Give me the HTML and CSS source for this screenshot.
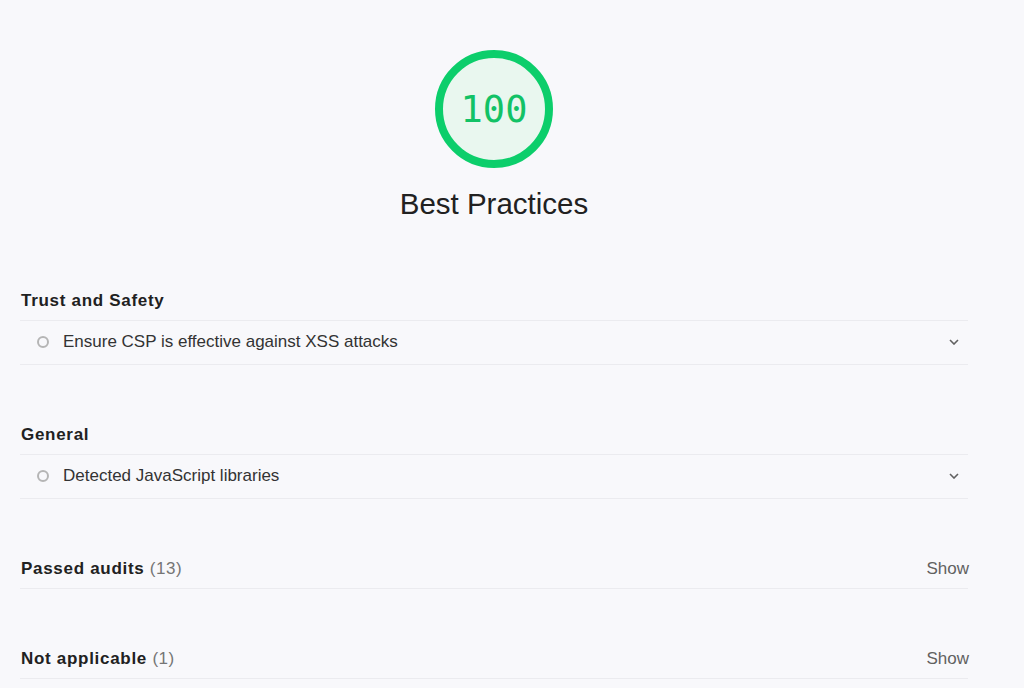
FILE: index.html
```html
<!DOCTYPE html>
<html lang="en">
<head>
  <meta charset="UTF-8">
  <meta name="viewport" content="width=device-width, initial-scale=1.0">
  <title>Best Practices</title>
  <link rel="stylesheet" href="styles.css">
</head>
<body>
<div class="report">
  <div class="score">
    <div class="gauge">
      <svg width="118" height="118" viewBox="0 0 118 118">
        <circle cx="59" cy="59" r="55" fill="#e9f7ef" stroke="#0cce6b" stroke-width="8"/>
      </svg>
      <span class="gauge-value">100</span>
    </div>
    <div class="score-title">Best Practices</div>
  </div>

  <div class="group">
    <div class="group-header">
      <span class="group-title">Trust and Safety</span>
    </div>
    <div class="audit">
      <span class="audit-icon"></span>
      <span class="audit-title">Ensure CSP is effective against XSS attacks</span>
      <svg class="chevron" width="10" height="6" viewBox="0 0 10 6"><polyline points="1,1 5,5 9,1" fill="none" stroke="#616161" stroke-width="1.6"/></svg>
    </div>
  </div>

  <div class="group">
    <div class="group-header">
      <span class="group-title">General</span>
    </div>
    <div class="audit">
      <span class="audit-icon"></span>
      <span class="audit-title">Detected JavaScript libraries</span>
      <svg class="chevron" width="10" height="6" viewBox="0 0 10 6"><polyline points="1,1 5,5 9,1" fill="none" stroke="#616161" stroke-width="1.6"/></svg>
    </div>
  </div>

  <div class="group">
    <div class="group-header">
      <span class="group-title">Passed audits <span class="count">(13)</span></span>
      <span class="show">Show</span>
    </div>
  </div>

  <div class="group">
    <div class="group-header">
      <span class="group-title">Not applicable <span class="count">(1)</span></span>
      <span class="show">Show</span>
    </div>
  </div>
</div>
</body>
</html>
```

FILE: styles.css
```css
body {
  margin: 0;
  background-color: #f8f8fb;
  font-family: "Liberation Sans", Arial, sans-serif;
  color: #212121;
}
.report {
  margin-left: 20px;
  width: 948px;
}
.score {
  display: flex;
  flex-direction: column;
  align-items: center;
  padding-top: 50px;
  padding-bottom: 9px;
}
.gauge {
  position: relative;
  width: 118px;
  height: 118px;
}
.gauge svg {
  display: block;
}
.gauge-value {
  position: absolute;
  left: 0;
  right: 0;
  top: 1px;
  line-height: 118px;
  text-align: center;
  font-family: "DejaVu Sans Mono", monospace;
  font-size: 37px;
  color: #12c266;
}
.score-title {
  margin-top: 18px;
  font-size: 29.5px;
  line-height: 36px;
}
.group {
  margin-top: 58px;
}
.group-header {
  display: flex;
  justify-content: space-between;
  font-size: 17px;
  line-height: 20px;
  padding-top: 2px;
  padding-bottom: 9px;
  border-bottom: 1px solid #ebebef;
}
.group-title {
  font-weight: bold;
  letter-spacing: 0.7px;
  padding-left: 1px;
}
.count {
  font-weight: normal;
  color: #757575;
  letter-spacing: 0.5px;
}
.show {
  color: #616161;
  margin-right: -1px;
}
.audit {
  display: flex;
  align-items: center;
  height: 43px;
  border-bottom: 1px solid #ebebef;
  font-size: 17px;
}
.audit-icon {
  width: 8px;
  height: 8px;
  border: 2px solid #b5b5b5;
  border-radius: 50%;
  margin-left: 17px;
  margin-right: 14px;
  margin-top: -1px;
}
.audit-title {
  flex: 1;
  color: #333;
  margin-top: -2px;
}
.chevron {
  margin-right: 9px;
  margin-top: -2px;
}
```
